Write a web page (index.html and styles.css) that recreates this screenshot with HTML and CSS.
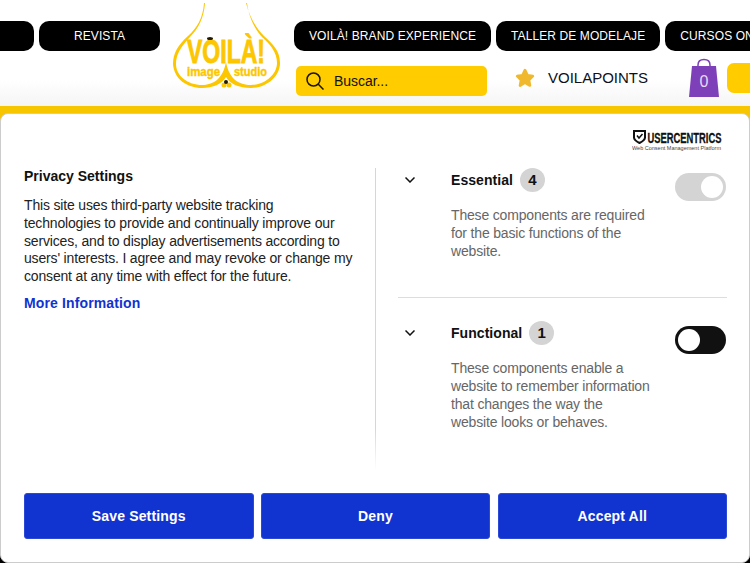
FILE: index.html
```html
<!DOCTYPE html>
<html lang="en">
<head>
<meta charset="utf-8">
<title>Voilà! Image Studio</title>
<link rel="stylesheet" href="styles.css">
</head>
<body>
<header class="site-header">
  <nav class="nav-left">
    <a class="pill pill-cut">INICIO</a>
    <a class="pill pill-revista">REVISTA</a>
  </nav>
  <svg class="logo" viewBox="173 3 107 90" width="107" height="90" aria-label="Voilà! Image Studio">
    <path class="logo-line" d="M204 3C203 18 197 28 188 36C178 45 173 53 173 64C174 79 187 88 202 88C213 88 222 84 226 77C230 84 239 88 251 88C266 88 280 77 280 63C280 51 273 44 264 36C256 28 250 18 246 3L247 3C249 18 255 29 262 37C271 45 277 53 277 63C277 75 264 85 251 85C239 85 229 79 226 62C223 79 213 85 202 85C188 85 176 76 176 64C176 54 181 47 190 37C198 29 204 18 205 3Z"/>
    <text class="logo-big" x="187" y="63" textLength="78" lengthAdjust="spacingAndGlyphs">VOILÀ!</text>
    <text class="logo-small" x="187" y="76" textLength="33" lengthAdjust="spacingAndGlyphs">image</text>
    <text class="logo-small" x="234" y="76" textLength="33" lengthAdjust="spacingAndGlyphs">studio</text>
    <ellipse class="logo-dark" cx="210" cy="38.500" rx="3" ry="1.500"/>
    <circle class="logo-yellow" cx="224" cy="85" r="2.500"/>
    <circle class="logo-yellow" cx="229" cy="85" r="2.500"/>
    <circle class="logo-dark" cx="226" cy="82" r="2"/>
  </svg>
  <div class="header-right">
    <nav class="nav-right">
      <a class="pill">VOILÀ! BRAND EXPERIENCE</a>
      <a class="pill">TALLER DE MODELAJE</a>
      <a class="pill">CURSOS ONLINE</a>
    </nav>
    <div class="tools">
      <div class="search">
        <svg class="search-icon" viewBox="0 0 18 18" width="18" height="18"><circle cx="7.500" cy="7.500" r="6.500"/><path d="M12.300 12.300L17.500 17.500"/></svg>
        <span>Buscar...</span>
      </div>
      <svg class="star" viewBox="0 0 18 18" width="20" height="20"><path d="M9 2L11.200 6.600L16 7.300L12.500 10.700L13.400 15.700L9 13.200L4.600 15.700L5.500 10.700L2 7.300L6.800 6.600Z"/></svg>
      <span class="points">VOILAPOINTS</span>
      <div class="bag">
        <svg viewBox="0 0 30 39" width="30" height="39"><path class="bag-handle" d="M9 12V7C9 3.500 11.500 1.500 15 1.500S21 3.500 21 7V12"/><path class="bag-body" d="M3 8H27L30 39H0Z"/></svg>
        <span class="bag-count">0</span>
      </div>
      <div class="cart-box"></div>
    </div>
  </div>
</header>
<main class="stage">
  <section class="modal">
    <div class="modal-top">
      <div class="uc-logo">
        <svg viewBox="0 0 90 22" width="90" height="22" aria-label="Usercentrics">
          <path class="uc-shield" d="M2 2H13V8.500C13 11 10.500 12.500 7.500 14C4.500 12.500 2 11 2 8.500Z"/>
          <path class="uc-check" d="M5 6.500L7 9L10.500 5"/>
          <text class="uc-name" x="15.500" y="13.500" textLength="74" lengthAdjust="spacingAndGlyphs">USERCENTRICS</text>
          <text class="uc-sub" x="0" y="20.500" textLength="89" lengthAdjust="spacingAndGlyphs">Web Consent Management Platform</text>
        </svg>
      </div>
    </div>
    <div class="modal-body">
      <div class="col-info">
        <h2 class="info-title">Privacy Settings</h2>
        <p class="info-text">This site uses third-party website tracking technologies to provide and continually improve our services, and to display advertisements according to users' interests. I agree and may revoke or change my consent at any time with effect for the future.</p>
        <a class="info-link">More Information</a>
      </div>
      <div class="col-options">
        <article class="option option-first">
          <svg class="chevron" viewBox="0 0 10 6" width="10" height="6"><path d="M.5 .5L5 5L9.500 .5"/></svg>
          <div class="option-main">
            <div class="option-title"><h3>Essential</h3><span class="count">4</span></div>
            <p class="option-text">These components are required for the basic functions of the website.</p>
          </div>
          <span class="toggle toggle-on"><i></i></span>
        </article>
        <article class="option">
          <svg class="chevron" viewBox="0 0 10 6" width="10" height="6"><path d="M.5 .5L5 5L9.500 .5"/></svg>
          <div class="option-main">
            <div class="option-title"><h3>Functional</h3><span class="count">1</span></div>
            <p class="option-text">These components enable a website to remember information that changes the way the website looks or behaves.</p>
          </div>
          <span class="toggle toggle-off"><i></i></span>
        </article>
      </div>
      <div class="fade"></div>
    </div>
    <div class="modal-actions">
      <button class="action">Save Settings</button>
      <button class="action">Deny</button>
      <button class="action">Accept All</button>
    </div>
  </section>
</main>
</body>
</html>
```
FILE: styles.css
```css
* { box-sizing: border-box; }
html, body { margin: 0; height: 563px; overflow: hidden; }
body {
  background: #000;
  font-family: "Liberation Sans", Arial, sans-serif;
  color: #111;
}

/* header */
.site-header {
  display: flex;
  align-items: flex-start;
  height: 106px;
  padding-top: 3px;
  overflow: hidden;
  background: linear-gradient(#fff 0, #fff 80px, #f5f5f5 106px);
}
.nav-left {
  display: flex;
  flex: none;
  gap: 5px;
  margin: 18px 0 0 -96px;
}
.nav-right {
  display: flex;
  gap: 5px;
}
.pill {
  display: flex;
  flex: none;
  align-items: center;
  justify-content: center;
  height: 30px;
  padding: 0 15px;
  border-radius: 10px;
  background: #000;
  color: #fff;
  font-size: 12px;
  letter-spacing: .1px;
  white-space: nowrap;
}
.pill-cut { width: 130px; }
.pill-revista { width: 121px; }
.logo { flex: none; margin-left: 13px; }
.logo-line, .logo-yellow { fill: #fcc600; }
.logo-big, .logo-small { fill: #fcc600; stroke: #fcc600; }
.logo-big { font: 700 33px "Liberation Sans", sans-serif; stroke-width: .9; }
.logo-small { font: 700 13px "Liberation Sans", sans-serif; stroke-width: .4; }
.logo-dark { fill: #221a00; }
.header-right {
  flex: none;
  width: 456px;
  margin: 18px 0 0 14px;
}
.tools {
  display: flex;
  align-items: flex-start;
}
.search {
  display: flex;
  flex: none;
  align-items: center;
  gap: 10px;
  width: 191px;
  height: 30px;
  margin: 15px 0 0 2px;
  padding-left: 10px;
  border-radius: 5px;
  background: #ffcc00;
  font-size: 14px;
  letter-spacing: -.05px;
}
.search-icon { fill: none; stroke: #1a1400; stroke-width: 1.500; }
.star {
  flex: none;
  margin: 17px 0 0 28px;
  fill: #f0b92d;
  stroke: #f0b92d;
  stroke-width: 2.500;
  stroke-linejoin: round;
}
.points {
  flex: none;
  width: 141px;
  margin: 17px 0 0 13px;
  font-size: 15px;
  line-height: 20px;
  color: #0c1020;
}
.bag {
  position: relative;
  flex: none;
  width: 30px;
  height: 39px;
  margin-top: 7px;
}
.bag svg { display: block; }
.bag-handle { fill: none; stroke: #7d40b9; stroke-width: 1.500; }
.bag-body { fill: #7d40b9; }
.bag-count {
  position: absolute;
  left: 0;
  right: 0;
  top: 15px;
  color: #e6d9f3;
  font-size: 16px;
  line-height: 18px;
  text-align: center;
}
.cart-box {
  flex: none;
  width: 60px;
  height: 30px;
  margin: 12px 0 0 8px;
  border-radius: 7px;
  background: #ffcc00;
}

/* consent */
.stage {
  height: 457px;
  padding-top: 7px;
  background: linear-gradient(#f7c600 0, #f7c600 20px, #000 20px);
}
.modal {
  display: flex;
  flex-direction: column;
  height: 450px;
  border: 1px solid #ccc;
  border-radius: 8px;
  background: #fff;
  overflow: hidden;
}
.modal-top {
  display: flex;
  justify-content: flex-end;
  flex: none;
  height: 54px;
  padding: 15px 27px 0 0;
}
.uc-logo svg { display: block; }
.uc-shield { fill: none; stroke: #111; stroke-width: 2; }
.uc-check { fill: none; stroke: #111; stroke-width: 1.500; }
.uc-name { font: 700 14px "Liberation Sans", sans-serif; fill: #111; stroke: #111; stroke-width: .3; }
.uc-sub { font: 400 6px "Liberation Sans", sans-serif; fill: #444; }
.modal-body {
  position: relative;
  display: flex;
  flex: none;
  height: 302px;
  overflow: hidden;
}
.col-info {
  flex: none;
  width: 375px;
  padding: 0 22px 0 23px;
  border-right: 1px solid #d6d6d6;
}
.info-title {
  margin: -1px 0 12px;
  font-size: 14px;
  line-height: 18px;
  font-weight: 700;
  color: #111;
}
.info-text {
  margin: 0 0 8px;
  font-size: 14px;
  line-height: 17.750px;
  letter-spacing: -.17px;
  color: #222;
}
.info-link {
  font-size: 14px;
  line-height: 18px;
  font-weight: 700;
  letter-spacing: .13px;
  color: #1133d0;
}
.col-options {
  flex: 1;
  padding: 0 22px;
}
.option {
  display: flex;
  align-items: flex-start;
  padding-bottom: 37px;
  border-bottom: 1px solid #ddd;
}
.option + .option {
  margin-top: 23px;
  border-bottom: 0;
}
.chevron {
  flex: none;
  margin: 9px 36px 0 7px;
  fill: none;
  stroke: #111;
  stroke-width: 1.500;
}
.option-main { flex: none; width: 200px; }
.option-title {
  display: flex;
  align-items: center;
  gap: 7px;
  height: 24px;
}
.option-title h3 {
  margin: 0;
  font-size: 14px;
  font-weight: 700;
  letter-spacing: .05px;
  color: #111;
}
.count {
  width: 25px;
  height: 24px;
  border-radius: 50%;
  background: #d4d4d4;
  font-size: 15px;
  font-weight: 700;
  line-height: 24px;
  text-align: center;
}
.option-text {
  margin: 14px 0 0;
  font-size: 14px;
  line-height: 18px;
  letter-spacing: -.17px;
  color: #666;
}
.toggle {
  display: flex;
  flex: none;
  align-items: center;
  width: 51px;
  height: 28px;
  margin: 5px 0 0 24px;
  padding: 0 3px;
  border-radius: 14px;
}
.toggle i {
  display: block;
  width: 22px;
  height: 22px;
  border-radius: 50%;
  background: #fff;
}
.toggle-on { justify-content: flex-end; background: #d4d4d4; }
.toggle-off { background: #111; }
.fade {
  position: absolute;
  left: 0;
  right: 0;
  bottom: 0;
  height: 42px;
  background: linear-gradient(rgba(255, 255, 255, 0), #fff);
}
.modal-actions {
  display: flex;
  flex: none;
  gap: 7.250px;
  padding: 23px 22px 0 23px;
}
.action {
  flex: 1;
  height: 46px;
  border: 1px solid #2c48d6;
  border-radius: 3px;
  background: #1133d0;
  color: #fff;
  font-family: "Liberation Sans", Arial, sans-serif;
  font-size: 14px;
  font-weight: 700;
  letter-spacing: .15px;
}
```
